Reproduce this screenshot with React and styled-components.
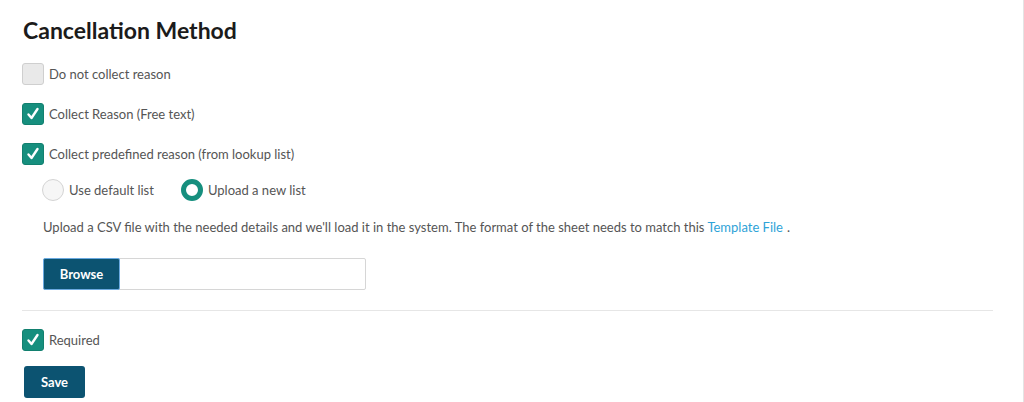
import React, { useState } from 'react';
import styled, { createGlobalStyle } from 'styled-components';

const GlobalStyle = createGlobalStyle`
  html, body {
    margin: 0;
    padding: 0;
    background: #fff;
  }
  body {
    font-family: Lato, "Open Sans", sans-serif;
    color: #555;
  }
`;

const Page = styled.div`
  width: 1024px;
  height: 402px;
  border-right: 1px solid #e4e4e4;
  padding: 16px 0 0 22px;
  box-sizing: border-box;
`;

const Title = styled.h1`
  margin: 0 0 19px 1px;
  font-size: 23px;
  font-weight: 700;
  color: #1b1b1b;
  line-height: 28px;
`;

const Row = styled.label`
  display: flex;
  align-items: center;
  gap: 5px;
  height: 22px;
  margin-bottom: ${(p) => p.$mb || 18}px;
  font-size: 13px;
  color: #555;
  cursor: pointer;
`;

const Box = styled.span`
  width: 22px;
  height: 22px;
  box-sizing: border-box;
  border-radius: 3px;
  display: flex;
  align-items: center;
  justify-content: center;
  background: ${(p) => (p.$checked ? '#168f7e' : '#e9e9e9')};
  border: 1px solid ${(p) => (p.$checked ? '#12806f' : '#cfcfcf')};
`;

const Check = ({ checked, label, mb, onToggle }) => (
  <Row $mb={mb} onClick={onToggle}>
    <Box $checked={checked}>
      {checked && (
        <svg width="14" height="14" viewBox="0 0 14 14">
          <path d="M2.5 7.5 L5.5 11 L11.5 2" fill="none" stroke="#fff" strokeWidth="2.4" strokeLinecap="round" strokeLinejoin="round" />
        </svg>
      )}
    </Box>
    {label}
  </Row>
);

const RadioGroup = styled.div`
  display: flex;
  align-items: center;
  gap: 27px;
  padding-left: 20px;
  margin-bottom: 17px;
`;

const RadioItem = styled.label`
  display: flex;
  align-items: center;
  gap: 5px;
  font-size: 13px;
  color: #555;
  cursor: pointer;
`;

const Circle = styled.span`
  width: 22px;
  height: 22px;
  box-sizing: border-box;
  border-radius: 50%;
  border: ${(p) => (p.$on ? '5px solid #168f7e' : '1px solid #d4d4d4')};
  background: ${(p) => (p.$on ? '#fff' : '#f6f6f6')};
`;

const Hint = styled.p`
  margin: 0 0 22px 21px;
  font-size: 13px;
  color: #555;
  line-height: 18px;
`;

const Link = styled.a`
  color: #2fa3d8;
  text-decoration: none;
  margin-right: 4px;
`;

const FileBox = styled.div`
  display: flex;
  width: 323px;
  height: 32px;
  margin-left: 21px;
  border: 1px solid #d6d6d6;
  border-radius: 2px;
  box-sizing: border-box;
  margin-bottom: 20px;
`;

const BrowseBtn = styled.button`
  width: 77px;
  height: 32px;
  margin: -1px 0 0 -1px;
  background: #0c5371;
  border: 1px solid #6aa9e0;
  border-radius: 2px;
  color: #fff;
  font-family: Lato, sans-serif;
  font-weight: 700;
  font-size: 13px;
  cursor: pointer;
`;

const Divider = styled.hr`
  width: 971px;
  margin: 0 0 18px 0;
  border: 0;
  border-top: 1px solid #e6e6e6;
`;

const SaveBtn = styled.button`
  margin-left: 2px;
  width: 61px;
  height: 32px;
  background: #0c5371;
  border: 0;
  border-radius: 3px;
  color: #fff;
  font-family: Lato, sans-serif;
  font-weight: 700;
  font-size: 13px;
  cursor: pointer;
`;

export default function App() {
  const [checks, setChecks] = useState({ none: false, free: true, lookup: true, required: true });
  const [list, setList] = useState('upload');
  const toggle = (k) => setChecks((c) => ({ ...c, [k]: !c[k] }));

  return (
    <Page>
      <GlobalStyle />
      <Title>Cancellation Method</Title>
      <Check checked={checks.none} label="Do not collect reason" onToggle={() => toggle('none')} />
      <Check checked={checks.free} label="Collect Reason (Free text)" onToggle={() => toggle('free')} />
      <Check checked={checks.lookup} label="Collect predefined reason (from lookup list)" mb={14} onToggle={() => toggle('lookup')} />
      <RadioGroup>
        <RadioItem onClick={() => setList('default')}>
          <Circle $on={list === 'default'} />
          Use default list
        </RadioItem>
        <RadioItem onClick={() => setList('upload')}>
          <Circle $on={list === 'upload'} />
          Upload a new list
        </RadioItem>
      </RadioGroup>
      <Hint>
        Upload a CSV file with the needed details and we&apos;ll load it in the system. The format of the sheet needs to match this{' '}
        <Link href="#">Template File</Link>.
      </Hint>
      <FileBox>
        <BrowseBtn>Browse</BrowseBtn>
      </FileBox>
      <Divider />
      <Check checked={checks.required} label="Required" mb={15} onToggle={() => toggle('required')} />
      <SaveBtn>Save</SaveBtn>
    </Page>
  );
}
